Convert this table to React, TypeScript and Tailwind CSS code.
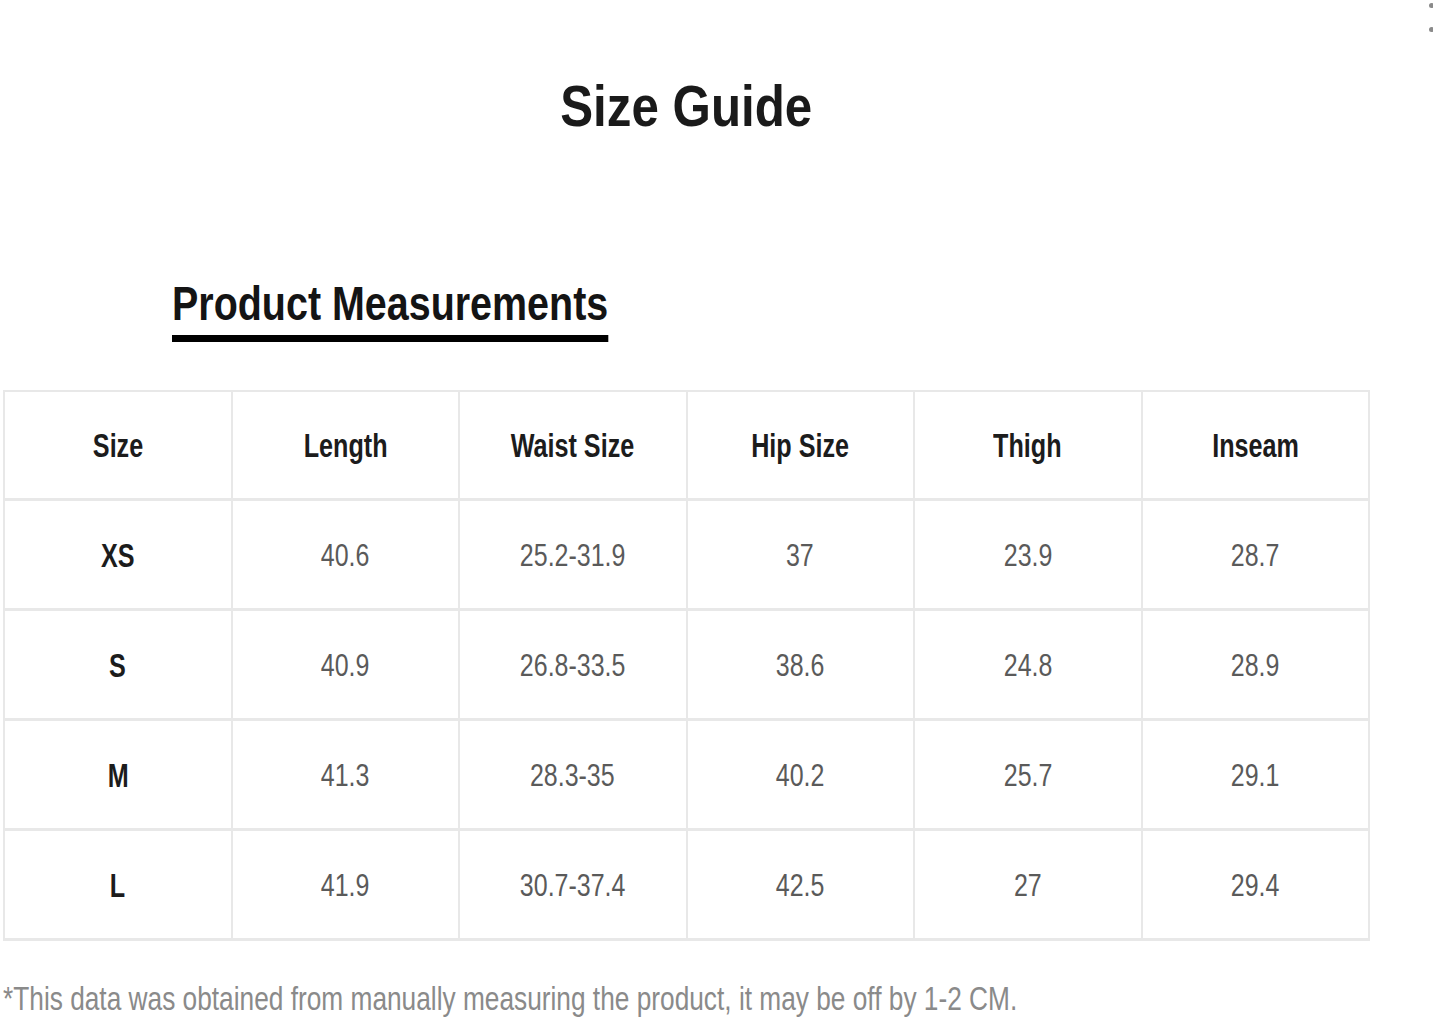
import React from 'react';

// Size guide table for the product page
const headers = ['Size', 'Length', 'Waist Size', 'Hip Size', 'Thigh', 'Inseam'];

const rows: string[][] = [
  ['XS', '40.6', '25.2-31.9', '37', '23.9', '28.7'],
  ['S', '40.9', '26.8-33.5', '38.6', '24.8', '28.9'],
  ['M', '41.3', '28.3-35', '40.2', '25.7', '29.1'],
  ['L', '41.9', '30.7-37.4', '42.5', '27', '29.4'],
];

function Cell({ children, kind, tall }: { children: React.ReactNode; kind: 'head' | 'label' | 'value'; tall?: boolean }) {
  const text =
    kind === 'value'
      ? 'text-[32px] font-normal text-[#5a5a5a] scale-x-[0.78]'
      : 'text-[34px] font-bold text-[#1c1c1c] scale-x-[0.74]';
  return (
    <div
      className={`flex items-center justify-center border-r-2 border-b-[3px] border-[#e8e8e8] ${
        tall ? 'h-[110px]' : 'h-[109px]'
      }`}
    >
      <span className={`inline-block whitespace-nowrap leading-none origin-center ${text}`}>{children}</span>
    </div>
  );
}

export default function App() {
  return (
    <div className="relative w-[1433px] h-[1023px] overflow-hidden bg-white font-['Liberation_Sans',Arial,sans-serif]">
      {/* cut-off menu dots at the edge */}
      <div className="absolute left-[1429px] top-[3px] w-[5px] h-[5px] rounded-full bg-[#8a8a8a]" />
      <div className="absolute left-[1429px] top-[27px] w-[5px] h-[5px] rounded-full bg-[#8a8a8a]" />

      <div className="flex flex-col w-[1370px] pl-[3px]">
        <div className="pt-[77px] text-center">
          <h1 className="inline-block text-[58px] font-bold leading-none text-[#1a1a1a] scale-x-[0.85] origin-center">
            Size Guide
          </h1>
        </div>

        <div className="pt-[144px] pl-[169px]">
          <h2 className="inline-block whitespace-nowrap text-[49px] font-bold leading-none text-[#141414] pb-[7px] border-b-[7px] border-black scale-x-[0.805] origin-left">
            Product Measurements
          </h2>
        </div>

        <div className="mt-[48px] grid grid-cols-6 border-t-2 border-l-2 border-[#e8e8e8]">
          {headers.map((h) => (
            <Cell key={h} kind="head">
              {h}
            </Cell>
          ))}
          {rows.map((r) =>
            r.map((v, i) => (
              <Cell key={r[0] + i} kind={i === 0 ? 'label' : 'value'} tall>
                {v}
              </Cell>
            ))
          )}
        </div>

        <p className="mt-[41px] whitespace-nowrap text-[33px] leading-none text-[#8a8a8a] scale-x-[0.796] origin-left">
          *This data was obtained from manually measuring the product, it may be off by 1-2 CM.
        </p>
      </div>
    </div>
  );
}
